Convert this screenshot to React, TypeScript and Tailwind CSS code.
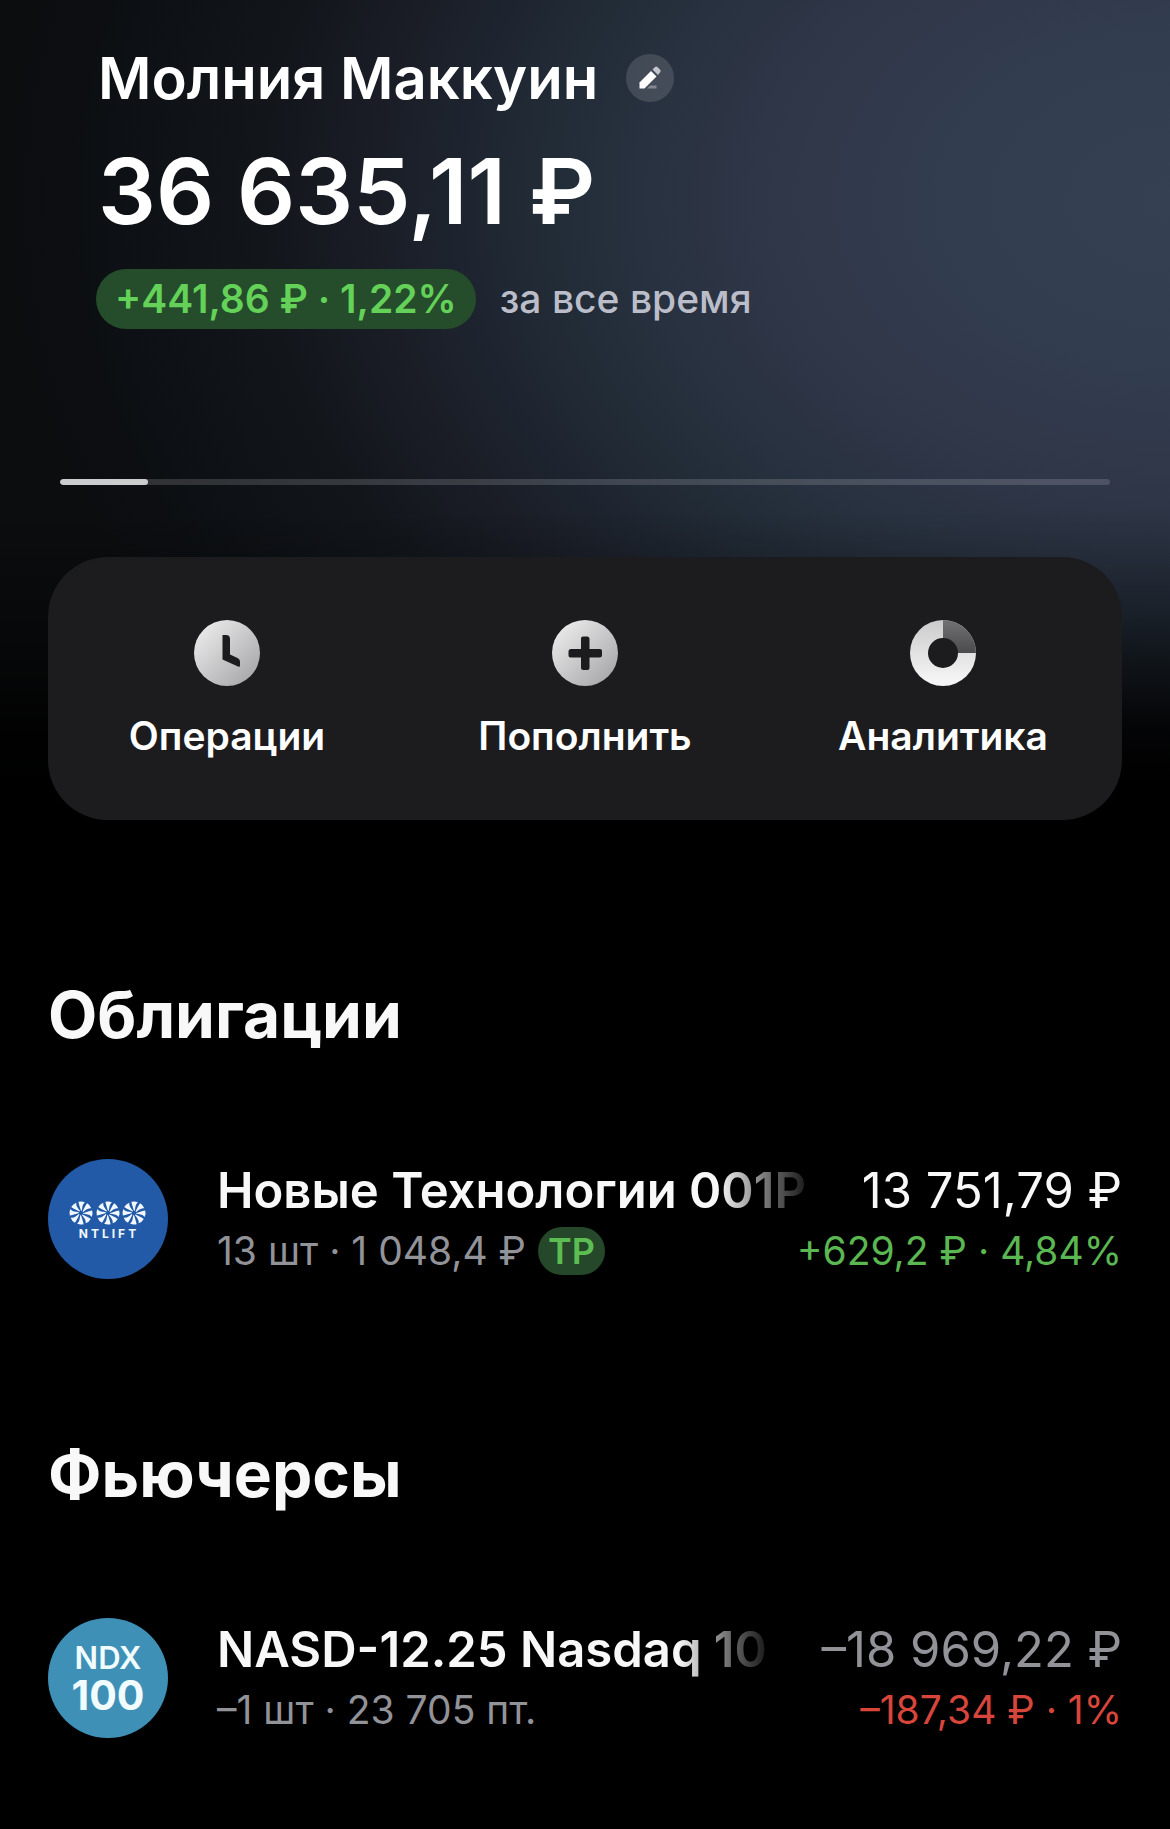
import React from 'react';
import clsx from 'clsx';

type Position = {
  id: string;
  name: string;
  details: string;
  badge?: string;
  value: string;
  change: string;
  muted?: boolean;
  negative?: boolean;
  logo: React.ReactNode;
};

function ClockIcon() {
  return <svg viewBox="0 0 66 66" className="w-[66px] h-[66px]" aria-hidden="true">
      <defs>
        <linearGradient id="clockFill" x1="0" y1="0" x2="1" y2="1">
          <stop offset="0.15" stopColor="#e6e6e7" />
          <stop offset="0.85" stopColor="#acacae" />
        </linearGradient>
      </defs>
      <circle cx="33" cy="33" r="33" fill="url(#clockFill)" />
      <path d="M28.500 15h3.500a4 4 0 0 1 4 4v15.500l7.500 3.500c2 1.200 2.500 2.300 2.500 4.200v3.300c0 1.200-1 1.600-2 1L28.500 39.500z" fill="#1c1c1e" />
    </svg>;
}

function PlusIcon() {
  return <svg viewBox="0 0 66 66" className="w-[66px] h-[66px]" aria-hidden="true">
      <defs>
        <linearGradient id="plusFill" x1="0" y1="0" x2="1" y2="1">
          <stop offset="0.15" stopColor="#e6e6e7" />
          <stop offset="0.85" stopColor="#acacae" />
        </linearGradient>
      </defs>
      <circle cx="33" cy="33" r="33" fill="url(#plusFill)" />
      <path d="M29 18.500q0-2 2-2h4q2.500 0 2.500 2.500v10H48q2 0 2 2v4q0 2.500-2.500 2.500h-10V48q0 2-2 2h-4q-2.500 0-2.500-2.500v-10H18.500q-2 0-2-2v-4q0-2.500 2.500-2.500h10z" fill="#1c1c1e" />
    </svg>;
}

function DonutIcon() {
  return <svg viewBox="0 0 66 66" className="w-[66px] h-[66px]" aria-hidden="true">
      <defs>
        <linearGradient id="donutFill" x1="0" y1="0" x2="0" y2="1">
          <stop offset="0" stopColor="#cbcbcc" />
          <stop offset="0.9" stopColor="#f4f4f5" />
        </linearGradient>
        <linearGradient id="donutSlice" x1="0" y1="0" x2="0" y2="1">
          <stop offset="0" stopColor="#727274" />
          <stop offset="1" stopColor="#4b4b4d" />
        </linearGradient>
      </defs>
      <circle cx="33" cy="33" r="33" fill="url(#donutFill)" />
      <path d="M33 0a33 33 0 0 1 33 33H33z" fill="url(#donutSlice)" />
      <circle cx="33" cy="33" r="15" fill="#1c1c1e" />
    </svg>;
}

function PencilIcon() {
  return <svg viewBox="0 0 24 24" className="w-6 h-6" aria-hidden="true">
      <path d="M9 22.500 12 19.500H18.500v3z" fill="#85868f" />
      <path d="M1.500 16.500 13 5l5.500 5.500L6.500 22.500h-5z" fill="#fff" />
      <path d="M14.500 3.500 17 1q1.200-1 2.400 0l2.800 2.800q1 1.200 0 2.400L20 9z" fill="#c2c4ca" />
    </svg>;
}

function Fan({ cx }: { cx: number }) {
  return <g transform={`translate(${cx} 54)`}>
      {[0, 45, 90, 135, 180, 225, 270, 315].map(angle => <path key={angle} transform={`rotate(${angle})`} d="M0-2.200C-.8-5-2-7.500-2.600-11.200Q.8-12.200 4-10.600C1-8.500 1.400-5 .8-2.200z" fill="#f1f8ff" />)}
    </g>;
}

function NtliftLogo() {
  return <div className="w-[120px] h-[120px] shrink-0 rounded-full bg-[#225aa7]">
      <svg viewBox="0 0 120 120" className="w-full h-full" role="img" aria-label="NTLIFT">
        <Fan cx={33} />
        <Fan cx={60} />
        <Fan cx={86} />
        <text x="61" y="79" textAnchor="middle" fontSize="12" fontWeight="700" letterSpacing="3" fill="#f1f8ff">NTLIFT</text>
      </svg>
    </div>;
}

function NdxLogo() {
  return <div className="w-[120px] h-[120px] shrink-0 rounded-full bg-[#3f90b7]">
      <svg viewBox="0 0 120 120" className="w-full h-full" role="img" aria-label="NDX 100">
        <text x="60" y="51" textAnchor="middle" fontSize="31" fontWeight="600" fill="#f1fcff">NDX</text>
        <text x="60" y="92" textAnchor="middle" fontSize="41" fontWeight="700" fill="#f1fcff">100</text>
      </svg>
    </div>;
}

const actions = [{
  label: 'Операции',
  icon: <ClockIcon />
}, {
  label: 'Пополнить',
  icon: <PlusIcon />
}, {
  label: 'Аналитика',
  icon: <DonutIcon />
}];

const sections: { title: string; positions: Position[] }[] = [{
  title: 'Облигации',
  positions: [{
    id: 'ntlift',
    name: 'Новые Технологии 001Р',
    details: '13 шт · 1 048,4 ₽',
    badge: 'ТР',
    value: '13 751,79 ₽',
    change: '+629,2 ₽ · 4,84%',
    logo: <NtliftLogo />
  }]
}, {
  title: 'Фьючерсы',
  positions: [{
    id: 'nasd',
    name: 'NASD-12.25 Nasdaq 10',
    details: '–1 шт · 23 705 пт.',
    value: '–18 969,22 ₽',
    change: '–187,34 ₽ · 1%',
    muted: true,
    negative: true,
    logo: <NdxLogo />
  }]
}];

function PositionRow({ position }: { position: Position }) {
  return <li className="flex items-center">
      {position.logo}
      <div className="flex-1 min-w-0 ml-[49px]">
        <div className="flex items-center h-16">
          {/* Long names fade out instead of being cut with dots */}
          <span className="flex-1 min-w-0 overflow-hidden whitespace-nowrap font-semibold text-[49px] leading-16 text-[#f8f8f8] mask-[linear-gradient(to_right,#000_calc(100%-100px),rgba(0,0,0,0.4)_calc(100%-45px),transparent)]">
            {position.name}
          </span>
          <span className={clsx('shrink-0 ml-11 text-[49px] leading-16', position.muted ? 'text-[#929399]' : 'text-[#f8f8f8]')}>
            {position.value}
          </span>
        </div>
        <div className="flex items-center justify-between h-14">
          <div className="flex items-center gap-3 text-[39px] text-[#929399]">
            <span>{position.details}</span>
            {position.badge && <span className="h-12 px-[10px] rounded-full bg-[#25482a] font-semibold text-4xl leading-12 text-[#5bbd52]">
                {position.badge}
              </span>}
          </div>
          <span className={clsx('text-[39px]', position.negative ? 'text-[#d8453b]' : 'text-[#5bb752]')}>
            {position.change}
          </span>
        </div>
      </div>
    </li>;
}

export default function App() {
  return <main className="min-h-screen bg-black font-['Inter','Liberation_Sans',sans-serif] text-white">
      <div className="px-12 pt-[46px] bg-[linear-gradient(to_bottom,transparent_510px,rgba(0,0,0,0.15)_560px,rgba(0,0,0,0.3)_610px,rgba(0,0,0,0.6)_680px,rgba(0,0,0,0.88)_730px,#000_785px),radial-gradient(1170px_840px_at_1170px_200px,#354152_0%,#323e50_17%,#303749_33%,#293241_44%,#222c37_53%,#1e2530_60%,#1a1d26_68%,#12161b_78%,#0d1014_90%,#0b0d0f_100%)]">
        <header className="px-[50px]">
          <div className="flex items-center gap-7 h-16">
            <h1 className="font-semibold text-[58px] leading-16">Молния Маккуин</h1>
            <button type="button" aria-label="Изменить название" className="flex items-center justify-center w-12 h-12 rounded-full bg-white/13">
              <PencilIcon />
            </button>
          </div>
          <p className="mt-[33px] font-semibold text-[91px] leading-24">36 635,11 ₽</p>
          <div className="flex items-center mt-[30px] gap-6 text-[39px] font-medium">
            <span className="h-15 px-[19px] -ml-[2px] rounded-full bg-[#254c2b] leading-15 font-semibold text-[#64d158]">+441,86 ₽ · 1,22%</span>
            <span className="text-[#bbbec9]">за все время</span>
          </div>
        </header>

        <div className="mt-[150px] mx-3 h-[6px] rounded-full bg-white/15 overflow-hidden">
          <div className="w-1/12 h-full rounded-full bg-[#cbccce]" />
        </div>

        <nav className="grid grid-cols-3 mt-[72px] pt-[63px] pb-[60px] rounded-[60px] bg-[#1c1c1e]">
          {actions.map(action => <button key={action.label} type="button" className="flex flex-col items-center gap-[26px]">
              {action.icon}
              <span className="font-semibold text-[39px] leading-12">{action.label}</span>
            </button>)}
        </nav>
      </div>

      <div className="px-12 pb-[89px]">
        {sections.map(section => <section key={section.title} className="pt-[155px]">
            <h2 className="font-bold text-[64px] leading-20 text-[#f8f8f8]">{section.title}</h2>
            <ul className="mt-[104px]">
              {section.positions.map(position => <PositionRow key={position.id} position={position} />)}
            </ul>
          </section>)}
      </div>
    </main>;
}
